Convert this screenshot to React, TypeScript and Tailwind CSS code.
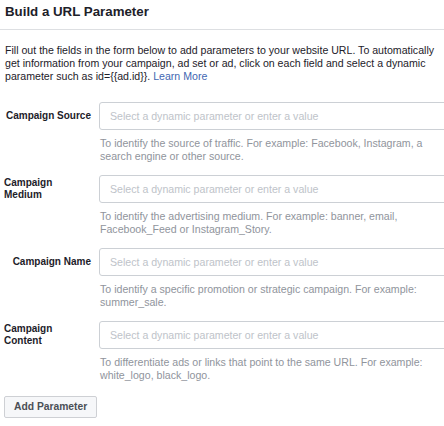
import React from 'react';

type Field = {
  label: string;
  help: string;
};

const fields: Field[] = [
  {
    label: 'Campaign Source',
    help: 'To identify the source of traffic. For example: Facebook, Instagram, a search engine or other source.',
  },
  {
    label: 'Campaign Medium',
    help: 'To identify the advertising medium. For example: banner, email, Facebook_Feed or Instagram_Story.',
  },
  {
    label: 'Campaign Name',
    help: 'To identify a specific promotion or strategic campaign. For example: summer_sale.',
  },
  {
    label: 'Campaign Content',
    help: 'To differentiate ads or links that point to the same URL. For example: white_logo, black_logo.',
  },
];

const FieldRow = ({ label, help }: Field) => (
  <div className="flex gap-[8px]">
    {/* label column: right-aligned when it fits, wraps left when it doesn't */}
    <div className="w-[87px] h-[28px] shrink-0 flex items-center justify-end">
      <span className="text-[10px] leading-[12.5px] font-bold text-[#1d2129]">{label}</span>
    </div>
    <div className="w-[360px] shrink-0">
      <input
        type="text"
        placeholder="Select a dynamic parameter or enter a value"
        className="block w-full h-[28px] px-[10px] border border-[#ccd0d5] rounded-[3px] text-[10.6px] text-[#1d2129] placeholder:text-[#bec3c9] outline-none"
      />
      <p className="mt-[7px] pl-[1px] w-[338px] text-[10.6px] leading-[13px] text-[#90949c]">{help}</p>
    </div>
  </div>
);

export default function App() {
  return (
    <div
      className="w-[444px] h-[426px] overflow-hidden bg-white"
      style={{ fontFamily: '"Liberation Sans", Arial, sans-serif' }}
    >
      {/* Header */}
      <div className="h-[30px] border-b border-[#dddfe2] pl-[5px] pt-[4px]">
        <h2 className="text-[13.3px] leading-[16px] font-bold text-[#1d2129]">Build a URL Parameter</h2>
      </div>

      <div className="px-[4px]">
        <p className="mt-[14px] pl-[1px] text-[10.6px] leading-[13px] text-[#1d2129]">
          Fill out the fields in the form below to add parameters to your website URL. To automatically get
          information from your campaign, ad set or ad, click on each field and select a dynamic parameter such as{' '}
          {'id={{ad.id}}'}. <a className="text-[#4267b2]">Learn More</a>
        </p>

        <div className="mt-[19px] flex flex-col gap-[12px]">
          {fields.map((f) => (
            <FieldRow key={f.label} {...f} />
          ))}
        </div>

        <button className="mt-[14px] h-[22px] px-[9px] border border-[#ced0d4] rounded-[2px] bg-[#f6f7f9] text-[10.3px] font-bold text-[#4b4f56]">
          Add Parameter
        </button>
      </div>
    </div>
  );
}
